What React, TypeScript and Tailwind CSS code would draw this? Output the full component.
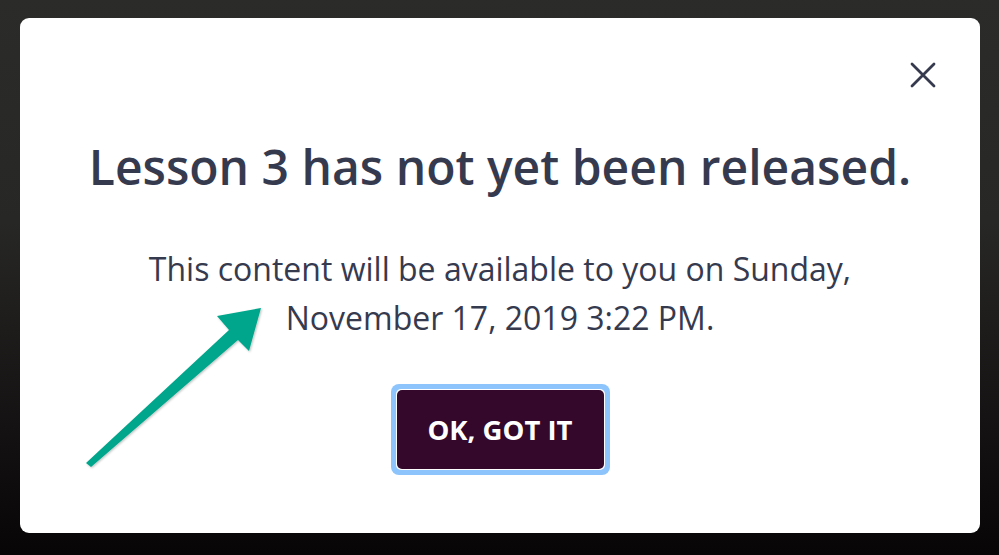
import React from "react";

export default function App() {
  return (
    <div className="relative w-[999px] h-[555px] overflow-hidden bg-[linear-gradient(to_bottom,#2b2c29_0%,#272725_40%,#151313_75%,#070505_100%)] pt-[18px] pl-[20px] pr-[19px] pb-[22px]" style={{ fontFamily: '"Open Sans", "Noto Sans", sans-serif' }}>
      <div className="relative w-full h-full rounded-[9px] bg-white flex flex-col items-center">
        <button className="absolute top-[44px] right-[44px] w-[26px] h-[26px] flex items-center justify-center text-[#363a4e]">
          <svg width="26" height="26" viewBox="0 0 26 26" fill="none" stroke="currentColor" strokeWidth="2.8" strokeLinecap="round">
            <path d="M2 2 L24 24 M24 2 L2 24" />
          </svg>
        </button>
        <h1 className="mt-[119px] text-[48px] leading-[60px] font-semibold text-[#363a4f] tracking-[0px]">
          Lesson 3 has not yet been released.
        </h1>
        <p className="mt-[47px] text-[32px] leading-[49px] text-[#363a4f] text-center">
          This content will be available to you on Sunday,<br />November 17, 2019 3:22 PM.
        </p>
        <div className="mt-[42px] rounded-[8px] bg-[#8dc4fb] p-[5px]">
          <div className="rounded-[5px] bg-white p-[1px]">
            <button className="w-[207px] h-[79px] rounded-[5px] bg-[#33082b] text-white text-[27.5px] font-bold tracking-[0px]">
              OK, GOT IT
            </button>
          </div>
        </div>
      </div>
      <svg className="absolute left-0 top-0" width="999" height="555" viewBox="0 0 999 555">
        <defs>
          <filter id="sh" x="-20%" y="-20%" width="140%" height="140%">
            <feDropShadow dx="1" dy="1" stdDeviation="1.2" floodColor="#000" floodOpacity="0.25" />
          </filter>
        </defs>
        <polygon filter="url(#sh)" fill="#00a68b" points="86,463 229,330 217,316 261,308 249,351 238,340 91,467" />
      </svg>
    </div>
  );
}
